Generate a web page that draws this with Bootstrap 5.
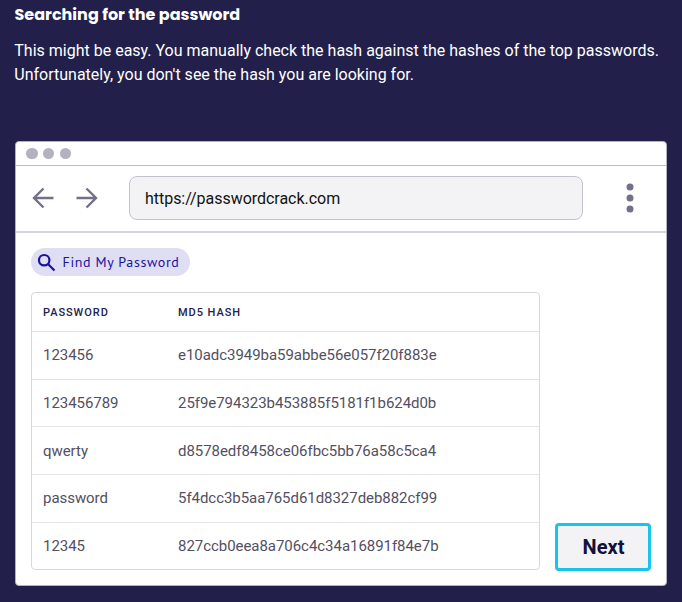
<!DOCTYPE html>
<html lang="en">
<head>
<meta charset="utf-8">
<meta name="viewport" content="width=device-width, initial-scale=1">
<title>Searching for the password</title>
<link href="https://cdn.jsdelivr.net/npm/bootstrap@5.3.0/dist/css/bootstrap.min.css" rel="stylesheet">
<style>
body{background:#22204a;font-family:Roboto,"Liberation Sans",sans-serif;height:602px;overflow:hidden}
.page{padding:3px 15px 0}
.title{font:700 16px/24px Poppins,Inter,sans-serif;margin-left:-.5px !important}
.intro{font-size:16px;line-height:24px;margin:12px -10px 54px -.7px}
.window{width:652px;height:445px;border:1px solid #b3b0c0;border-radius:4px;overflow:hidden}
.chrome{height:24px;border-bottom:1px solid #bdbbc6;padding:0 10px;gap:5.3px}
.light{width:11.5px;height:11.5px;background:#b5b2bf}
.toolbar{height:67px;border-bottom:2px solid #d5d4dc;padding:0 30.5px 1px 15px}
.toolbar svg{display:block}
.forward{margin-left:19.5px}
.address{width:454px;height:44px;margin-left:30.5px;padding:1px 15px 0;border:1.5px solid #c3c1cc;border-radius:8px;background:#f3f3f5;color:#121212;font-size:16px;letter-spacing:-.03px}
.content{padding:15px 15px 15px}
.finder{width:159px;height:28px;background:#e0def3;color:#1b12a0;padding-left:6px;gap:6.5px;font:400 14px/28px "PT Sans","Noto Sans",sans-serif}
.finder span{letter-spacing:.64px}
.hashes{width:509px;height:278px;margin-top:16px;border:1px solid #d8d8dc;border-radius:4px}
.line{display:grid;grid-template-columns:135px 1fr;align-items:center;padding:.6px 0 0 11px;height:47.7px;border-top:1px solid #e4e4e8;color:#53505f;font-size:15px;letter-spacing:-.045px}
.line.heads{height:38px;padding-top:2px;border:0;color:#24214c;font-size:11px;font-weight:500;letter-spacing:.95px}
.next{width:96px;height:48px;margin-bottom:-1px;border:3px solid #18c5ea;border-radius:4px;background:#f3f3f5;color:#14113a;font-size:20px;font-weight:700;padding:0 0 1px 1px;line-height:1}
</style>
</head>
<body>
<main class="page text-white">
  <h1 class="title m-0">Searching for the password</h1>
  <p class="intro">This might be easy. You manually check the hash against the hashes of the top passwords.<br>Unfortunately, you don't see the hash you are looking for.</p>
  <section class="window bg-white">
    <div class="chrome d-flex align-items-center"><span class="light rounded-circle"></span><span class="light rounded-circle"></span><span class="light rounded-circle"></span></div>
    <div class="toolbar d-flex align-items-center">
      <svg width="24" height="24" viewBox="0 0 24 24" fill="none" stroke="#747088" stroke-width="2.4"><path d="M22.5 12H3M12.5 2.500 3 12l9.500 9.500"/></svg>
      <svg class="forward" width="24" height="24" viewBox="0 0 24 24" fill="none" stroke="#747088" stroke-width="2.4"><path d="M1.500 12H21M11.500 2.500 21 12l-9.500 9.500"/></svg>
      <div class="address d-flex align-items-center">https://passwordcrack.com</div>
      <svg class="ms-auto" width="12" height="32" viewBox="0 0 12 32" fill="#747088"><circle cx="6" cy="5" r="3.500"/><circle cx="6" cy="16" r="3.500"/><circle cx="6" cy="27" r="3.500"/></svg>
    </div>
    <div class="content">
      <div class="finder d-flex align-items-center rounded-pill"><svg width="19" height="19" viewBox="0 0 19 19" fill="none" stroke="#1b12a0" stroke-width="2.200"><circle cx="7.200" cy="7.200" r="5.200"/><path d="m11 11 6.500 6.500"/></svg><span>Find My Password</span></div>
      <div class="d-flex align-items-end justify-content-between">
        <div class="hashes">
          <div class="line heads"><span>PASSWORD</span><span>MD5 HASH</span></div>
          <div class="line"><span>123456</span><span>e10adc3949ba59abbe56e057f20f883e</span></div>
          <div class="line"><span>123456789</span><span>25f9e794323b453885f5181f1b624d0b</span></div>
          <div class="line"><span>qwerty</span><span>d8578edf8458ce06fbc5bb76a58c5ca4</span></div>
          <div class="line"><span>password</span><span>5f4dcc3b5aa765d61d8327deb882cf99</span></div>
          <div class="line"><span>12345</span><span>827ccb0eea8a706c4c34a16891f84e7b</span></div>
        </div>
        <button type="button" class="btn next">Next</button>
      </div>
    </div>
  </section>
</main>
<script src="https://cdn.jsdelivr.net/npm/bootstrap@5.3.0/dist/js/bootstrap.bundle.min.js"></script>
</body>
</html>
